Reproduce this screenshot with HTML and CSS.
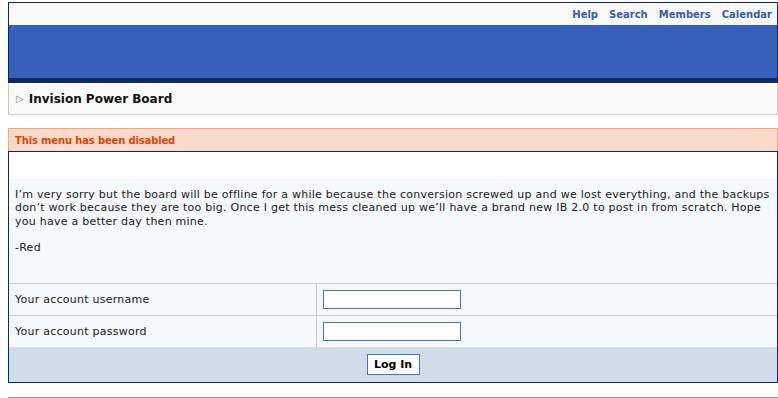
FILE: index.html
```html
<!DOCTYPE html>
<html lang="en">
<head>
    <meta charset="UTF-8">
    <title>Invision Power Board</title>
    <link rel="stylesheet" href="styles.css">
</head>
<body>
    <div class="board-header">
        <div class="userlinks">
            <a href="#">Help</a>
            <a href="#">Search</a>
            <a href="#">Members</a>
            <a href="#">Calendar</a>
        </div>
        <div class="banner"></div>
    </div>

    <div class="navstrip"><span class="nav-arrow">&#9655;</span> Invision Power Board</div>

    <div class="notice">This menu has been disabled</div>

    <div class="tableborder">
        <div class="maintitle"></div>
        <div class="message">
            I’m very sorry but the board will be offline for a while because the conversion screwed up and we lost everything, and the backups don’t work because they are too big. Once I get this mess cleaned up we’ll have a brand new IB 2.0 to post in from scratch. Hope you have a better day then mine.<br><br>-Red
        </div>
        <div class="login-row">
            <div class="login-label">Your account username</div>
            <div class="login-field"><input type="text" class="forminput"></div>
        </div>
        <div class="login-row">
            <div class="login-label">Your account password</div>
            <div class="login-field"><input type="password" class="forminput"></div>
        </div>
        <div class="actions">
            <button class="button">Log In</button>
        </div>
    </div>

    <div class="footer-line"></div>
</body>
</html>
```

FILE: styles.css
```css
body {
    font-family: 'DejaVu Sans', Verdana, sans-serif;
    font-size: 11px;
    margin: 2px 0 0 8px;
    padding: 0;
    background-color: #ffffff;
    color: #000000;
}
.board-header {
    border: 1px solid #072a66;
    border-bottom: none;
}
.userlinks {
    height: 22px;
    background-color: #f9f9f9;
    display: flex;
    justify-content: flex-end;
    align-items: center;
    gap: 11px;
    padding-right: 5px;
}
.userlinks a {
    color: #3a5ea8;
    font-weight: bold;
    font-size: 10px;
    text-decoration: none;
}
.banner {
    height: 53px;
    background-color: #3860bb;
    border-bottom: 5px solid #0b2a63;
}
.navstrip {
    height: 31px;
    background-color: #f9f9f9;
    border: 1px solid #c8c8c8;
    border-top: none;
    display: flex;
    align-items: center;
    padding-left: 7px;
    font-size: 12px;
    font-weight: bold;
    color: #111111;
}
.nav-arrow {
    color: #888888;
    font-size: 10px;
    font-weight: normal;
    margin-right: 5px;
}
.notice {
    margin-top: 13px;
    height: 22px;
    background-color: #fbdac9;
    border: 1px solid #f3a87e;
    border-bottom: none;
    display: flex;
    align-items: center;
    padding-left: 6px;
    font-weight: bold;
    font-size: 10px;
    letter-spacing: -0.15px;
    color: #d9470b;
}
.tableborder {
    border: 1px solid #072a66;
}
.maintitle {
    height: 27px;
    background-color: #ffffff;
}
.message {
    background-color: #f5f8fc;
    padding: 9px 6px 29px 6px;
    line-height: 13.3px;
    letter-spacing: 0.25px;
    color: #1a1a1a;
}
.login-row {
    display: flex;
    height: 31px;
    border-top: 1px solid #c2cfdf;
    background-color: #f5f8fc;
}
.login-label {
    width: 301px;
    padding-left: 6px;
    display: flex;
    align-items: center;
    border-right: 1px solid #c2cfdf;
    letter-spacing: 0.25px;
    color: #1a1a1a;
}
.login-field {
    display: flex;
    align-items: center;
    padding-left: 6px;
}
.forminput {
    width: 138px;
    height: 19px;
    box-sizing: border-box;
    border: 1px solid #4a72c4;
    background-color: #ffffff;
    margin: 0;
}
.actions {
    height: 35px;
    background-color: #d1dce9;
    display: flex;
    justify-content: center;
    align-items: center;
}
.button {
    font-family: 'DejaVu Sans', Verdana, sans-serif;
    font-size: 11px;
    font-weight: bold;
    height: 21px;
    width: 53px;
    padding: 0;
    background-color: #ffffff;
    border: 1px solid #4a72c4;
    color: #000000;
}
.footer-line {
    margin-top: 14px;
    border-top: 1px solid #8b9bb4;
}
```
